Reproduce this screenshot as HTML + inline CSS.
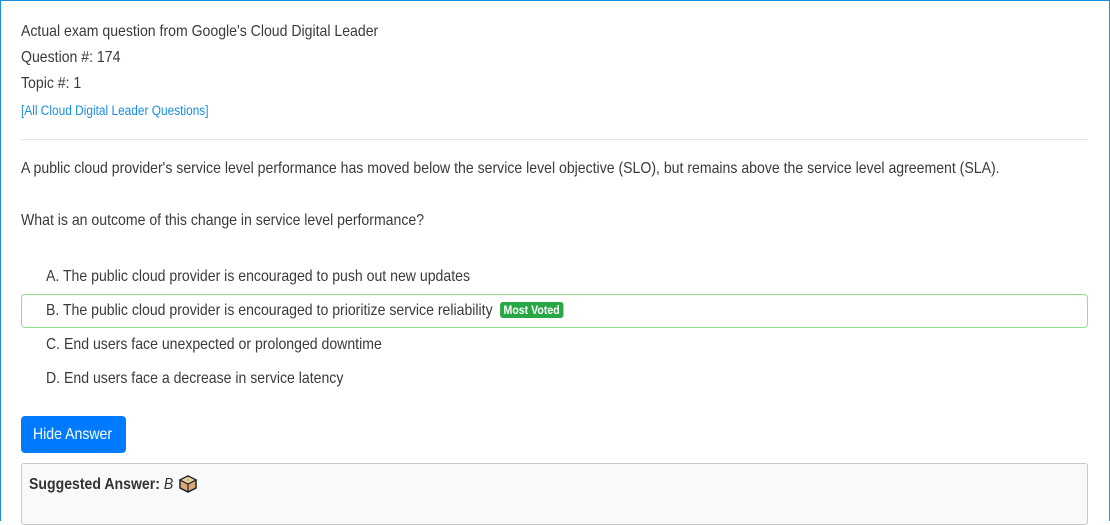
<!DOCTYPE html>
<html><head><style>
html,body{margin:0;padding:0;}
body{width:1110px;height:512px;overflow:hidden;background:#fff;font-family:"Liberation Sans",sans-serif;color:#3a3a3a;position:relative;}
.frame{position:absolute;left:0;top:0;width:1108px;height:520px;border:1px solid #1a8fe0;border-bottom:none;}
.t{position:absolute;white-space:nowrap;transform:scaleX(.88);transform-origin:left center;font-size:16px;line-height:20px;}
.hr{position:absolute;left:21px;top:139px;width:1067px;height:1px;background:#e3e3e3;}
.boxB{position:absolute;left:21px;top:294px;width:1065px;height:32px;border:1px solid #8fe08f;border-radius:4px;}
.badge{display:inline-block;background:#28a745;color:#fff;font-weight:bold;font-size:12px;line-height:14px;padding:1px 4px;border-radius:3px;vertical-align:1px;margin-left:4px;}
.btn{position:absolute;left:21px;top:416px;width:105px;height:37px;background:#007bff;border-radius:4px;}
.sug{position:absolute;left:21px;top:463px;width:1065px;height:60px;background:#f8f9fa;border:1px solid #c8c8c8;border-radius:3px;}
</style></head><body>
<div class="frame"></div>
<div class="t" style="left:21px;top:22px">Actual exam question from Google's Cloud Digital Leader</div>
<div class="t" style="left:21px;top:48px">Question #: 174</div>
<div class="t" style="left:21px;top:74px">Topic #: 1</div>
<div class="t" style="left:21px;top:101px;font-size:13.5px;color:#1a8fe0">[All Cloud Digital Leader Questions]</div>
<div class="hr"></div>
<div class="t" style="left:21px;top:159px">A public cloud provider's service level performance has moved below the service level objective (SLO), but remains above the service level agreement (SLA).</div>
<div class="t" style="left:21px;top:211px">What is an outcome of this change in service level performance?</div>
<div class="t" style="left:46px;top:267px">A. The public cloud provider is encouraged to push out new updates</div>
<div class="boxB"></div>
<div class="t" style="left:46px;top:301px">B. The public cloud provider is encouraged to prioritize service reliability <span class="badge">Most Voted</span></div>
<div class="t" style="left:46px;top:335px">C. End users face unexpected or prolonged downtime</div>
<div class="t" style="left:46px;top:369px">D. End users face a decrease in service latency</div>
<div class="btn"></div>
<div class="t" style="left:33px;top:425px;color:#fff">Hide Answer</div>
<div class="sug"></div>
<div class="t" style="left:29px;top:475px;color:#333"><b>Suggested Answer:</b> <i>B</i></div>
<svg style="position:absolute;left:178px;top:474px" width="20" height="20" viewBox="0 0 20 20">
<path d="M10 2 L18 6 L18 14 L10 18 L2 14 L2 6 Z" fill="#d9a878" stroke="#222" stroke-width="1.5"/>
<path d="M2 6 L10 10 L18 6 M10 10 L10 18" fill="none" stroke="#222" stroke-width="1.2"/>
<path d="M10 2 L18 6 L10 10 L2 6 Z" fill="#f0d0a8" stroke="#222" stroke-width="1.2"/>
<path d="M10 3 L11 7 L9 7 Z" fill="#6c6"/>
</svg>
</body></html>
